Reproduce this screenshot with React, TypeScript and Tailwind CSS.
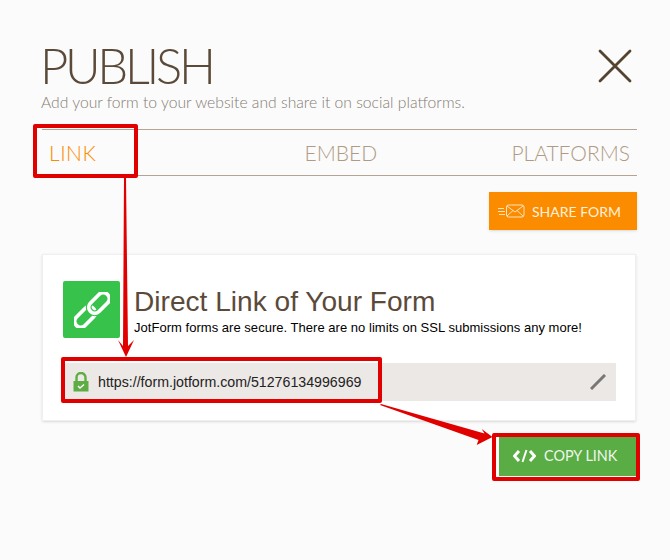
import React from 'react';

const geo = "font-['Lato',sans-serif]";

const Annotations = () => (
  <>
    {/* red highlight boxes */}
    <div className="absolute left-[33px] top-[124px] w-[105px] h-[54px] border-[4px] border-[#e00000] rounded-[2px]" />
    <div className="absolute left-[61px] top-[357px] w-[321px] h-[46px] border-[4px] border-[#e00000] rounded-[2px]" />
    <div className="absolute left-[492px] top-[433px] w-[148px] h-[48px] border-[4px] border-[#e00000] rounded-[2px]" />
    {/* arrows */}
    <svg className="absolute left-0 top-0 pointer-events-none" width="670" height="560" viewBox="0 0 670 560">
      <path d="M124 178 L126 178 L128 346 L134 340 L126 357 L118 340 L123 346 Z" fill="#e00000" />
      <path d="M380 405 L381 404 L484.500 433.500 L481.700 429 L492.500 437 L476.700 445 L478.500 440 Z" fill="#e00000" />
    </svg>
  </>
);

const CloseIcon = () => (
  <svg width="34" height="34" viewBox="0 0 34 34" fill="none" stroke="#54432f" strokeWidth="2.800" strokeLinecap="round">
    <path d="M2 2L32 32M32 2L2 32" />
  </svg>
);

const MailIcon = () => (
  <svg width="27" height="14" viewBox="0 0 27 14" fill="none" stroke="#ffe3bd" strokeWidth="1">
    <path d="M0 4.500H6M0 7.500H7M1 10.500H7" />
    <rect x="8.500" y="1" width="17.500" height="12" rx="2" />
    <path d="M9 2l8 6 8-6M9 12l6-5.500M25 12l-6-5.500" />
  </svg>
);

const ChainIcon = () => (
  <svg width="36" height="36" viewBox="0 0 36 36" fill="none" strokeWidth="3.800">
    <rect x="-12" y="-6" width="24" height="12" rx="6" stroke="#fff" transform="translate(11 25) rotate(-45)" />
    <rect x="-12" y="-6" width="24" height="12" rx="6" stroke="#37c24b" strokeWidth="6" transform="translate(25 11) rotate(-45)" />
    <rect x="-12" y="-6" width="24" height="12" rx="6" stroke="#fff" transform="translate(25 11) rotate(-45)" />
  </svg>
);

const LockIcon = () => (
  <svg width="16" height="20" viewBox="0 0 16 20">
    <path d="M3.500 10V5.500a4.500 4.500 0 0 1 9 0V10" fill="none" stroke="#5ead44" strokeWidth="2.400" />
    <rect x="0.500" y="9" width="15" height="10.500" fill="#5ead44" />
    <path d="M5 14l2 2 4-3.500" fill="none" stroke="#fff" strokeWidth="1.400" />
  </svg>
);

const PencilIcon = () => (
  <svg width="16" height="16" viewBox="0 0 16 16" fill="none" stroke="#777" strokeWidth="3">
    <path d="M1 15L15 1" />
  </svg>
);

const CodeIcon = () => (
  <svg width="23" height="14" viewBox="0 0 23 14" fill="none" stroke="#fff" strokeWidth="3">
    <path d="M6 2L1.500 7L6 12M17 2L21.500 7L17 12" />
    <path d="M13.500 1L9.500 13" strokeWidth="2" />
  </svg>
);

function App() {
  return (
    <div className="relative w-[670px] h-[560px] overflow-hidden bg-[#fbfbfb] pt-[40px] pl-[42px] pr-[33px]">
      {/* Header */}
      <div className="flex items-start justify-between">
        <div>
          <h1 className={`${geo} font-light text-[49px] leading-[50px] -ml-[2px] text-[#5b4a3a] tracking-[-3.300px]`}>PUBLISH</h1>
          <p className={`${geo} font-light text-[15.700px] leading-[20px] mt-[2px] text-[#857c73] -ml-[1px]`}>
            Add your form to your website and share it on social platforms.
          </p>
        </div>
        <div className="mt-[9px] mr-[5px]">
          <CloseIcon />
        </div>
      </div>

      {/* Tabs */}
      <div className={`${geo} flex items-center justify-between h-[47px] mt-[17px] pt-[1px] border-y border-[#b5a493] pl-[7px] pr-[7px] text-[21px] font-light text-[#b09a84]`}>
        <span className="text-[#fb8c00] tracking-[0.5px]">LINK</span>
        <span className="ml-[74px]">EMBED</span>
        <span>PLATFORMS</span>
      </div>

      {/* Share */}
      <div className="flex justify-end mt-[16px]">
        <button className={`${geo} flex items-center gap-[7px] w-[148px] h-[38px] pl-[9px] bg-[#fb8c00] text-[#fff1dd] text-[14px] shadow-sm`}>
          <MailIcon />
          SHARE FORM
        </button>
      </div>

      {/* Card */}
      <div className="mt-[24px] mr-[1px] h-[167px] bg-white border border-[#efefef] shadow-sm pt-[26px] pl-[20px] pr-[19px] font-['Liberation_Sans',sans-serif]">
        <div className="flex gap-[14px]">
          <div className="flex items-center justify-center w-[57px] h-[57px] rounded-[2px] bg-[#37c24b]">
            <ChainIcon />
          </div>
          <div>
            <div className="text-[28.100px] leading-[30px] mt-[6px] text-[#5b4a3a]">Direct Link of Your Form</div>
            <div className="text-[13px] leading-[14px] mt-[4px] tracking-[0.03px] text-black">JotForm forms are secure. There are no limits on SSL submissions any more!</div>
          </div>
        </div>
        <div className="flex items-center justify-between h-[38px] mt-[25px] bg-[#ece8e5] pl-[10px] pr-[10px]">
          <div className="flex items-center gap-[9px]">
            <LockIcon />
            <span className="text-[14.200px] mt-[1px] text-[#222]">https://form.jotform.com/51276134996969</span>
          </div>
          <PencilIcon />
        </div>
      </div>

      {/* Copy */}
      <div className="flex justify-end mt-[16px]">
        <button className={`${geo} flex items-center gap-[8px] w-[138px] h-[39px] pb-[1px] pl-[14px] bg-[#5aac44] text-[#eef7ec] text-[14.400px]`}>
          <CodeIcon />
          COPY LINK
        </button>
      </div>

      <Annotations />
    </div>
  );
}

export default App;
